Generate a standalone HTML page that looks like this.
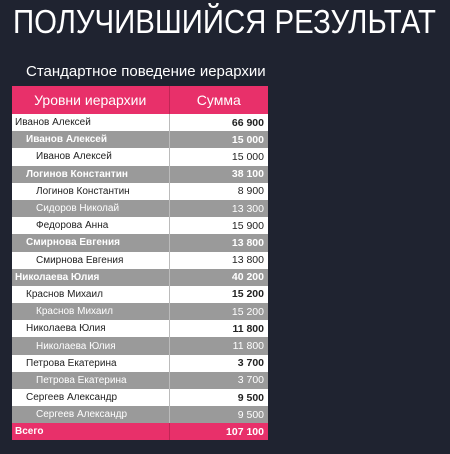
<!DOCTYPE html>
<html><head><meta charset="utf-8"><style>
body{margin:0;width:450px;height:454px;background:#1f2330;font-family:"Liberation Sans",sans-serif;overflow:hidden;position:relative}
.t{position:absolute;left:13px;top:3px;color:#fff;font-size:33px;white-space:nowrap;transform:scaleX(0.89);transform-origin:0 0}
.s{position:absolute;left:26px;top:63px;color:#fff;font-size:15px;white-space:nowrap}
table{position:absolute;left:12px;top:86px;width:256px;border-collapse:collapse;font-size:10px}
td{height:17.2px;padding:0;box-sizing:border-box;white-space:nowrap}
td.n{width:157px;border-right:1px solid #bbb}
td.v{text-align:right;padding-right:4px;font-size:10.5px}
th{background:#e8306a;color:#fff;font-weight:normal;font-size:14px;height:28px;padding:0}
th:first-child{border-right:1px solid #c02655}
tr.w td{background:#fff;color:#222}
tr.g td{background:#9a9a9a;color:#fff}
tr.tot td{background:#e8306a;color:#fff;font-weight:bold;height:17px}
.b{font-weight:bold}
.l0{padding-left:3px}.l1{padding-left:14px}.l2{padding-left:24px}
</style></head><body>
<div class="t">ПОЛУЧИВШИЙСЯ РЕЗУЛЬТАТ</div>
<div class="s">Стандартное поведение иерархии</div>
<table>
<tr><th>Уровни иерархии</th><th>Сумма</th></tr>
<tr class="w"><td class="n l0">Иванов Алексей</td><td class="v b">66 900</td></tr>
<tr class="g"><td class="n l1 b">Иванов Алексей</td><td class="v b">15 000</td></tr>
<tr class="w"><td class="n l2">Иванов Алексей</td><td class="v">15 000</td></tr>
<tr class="g"><td class="n l1 b">Логинов Константин</td><td class="v b">38 100</td></tr>
<tr class="w"><td class="n l2">Логинов Константин</td><td class="v">8 900</td></tr>
<tr class="g"><td class="n l2">Сидоров Николай</td><td class="v">13 300</td></tr>
<tr class="w"><td class="n l2">Федорова Анна</td><td class="v">15 900</td></tr>
<tr class="g"><td class="n l1 b">Смирнова Евгения</td><td class="v b">13 800</td></tr>
<tr class="w"><td class="n l2">Смирнова Евгения</td><td class="v">13 800</td></tr>
<tr class="g"><td class="n l0 b">Николаева Юлия</td><td class="v b">40 200</td></tr>
<tr class="w"><td class="n l1">Краснов Михаил</td><td class="v b">15 200</td></tr>
<tr class="g"><td class="n l2">Краснов Михаил</td><td class="v">15 200</td></tr>
<tr class="w"><td class="n l1">Николаева Юлия</td><td class="v b">11 800</td></tr>
<tr class="g"><td class="n l2">Николаева Юлия</td><td class="v">11 800</td></tr>
<tr class="w"><td class="n l1">Петрова Екатерина</td><td class="v b">3 700</td></tr>
<tr class="g"><td class="n l2">Петрова Екатерина</td><td class="v">3 700</td></tr>
<tr class="w"><td class="n l1">Сергеев Александр</td><td class="v b">9 500</td></tr>
<tr class="g"><td class="n l2">Сергеев Александр</td><td class="v">9 500</td></tr>
<tr class="tot"><td class="n l0" style="border-right-color:#c02655">Всего</td><td class="v">107 100</td></tr>
</table>
</body></html>
